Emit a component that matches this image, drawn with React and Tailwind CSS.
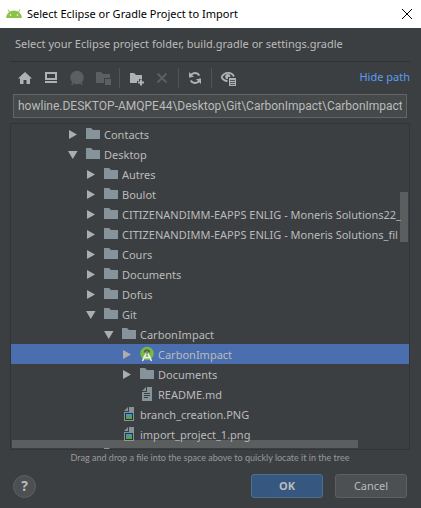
import React from "react";

const ROWS = [
  { level: 0, arrow: "closed", icon: "folder", name: "Contacts" },
  { level: 0, arrow: "open", icon: "folder", name: "Desktop" },
  { level: 1, arrow: "closed", icon: "folder", name: "Autres" },
  { level: 1, arrow: "closed", icon: "folder", name: "Boulot" },
  { level: 1, arrow: "closed", icon: "folder", name: "CITIZENANDIMM-EAPPS ENLIG - Moneris Solutions22_" },
  { level: 1, arrow: "closed", icon: "folder", name: "CITIZENANDIMM-EAPPS ENLIG - Moneris Solutions_fil" },
  { level: 1, arrow: "closed", icon: "folder", name: "Cours" },
  { level: 1, arrow: "closed", icon: "folder", name: "Documents" },
  { level: 1, arrow: "closed", icon: "folder", name: "Dofus" },
  { level: 1, arrow: "open", icon: "folder", name: "Git" },
  { level: 2, arrow: "open", icon: "folder", name: "CarbonImpact" },
  { level: 3, arrow: "closed", icon: "studio", name: "CarbonImpact", selected: true },
  { level: 3, arrow: "closed", icon: "folder", name: "Documents" },
  { level: 3, icon: "text", name: "README.md" },
  { level: 2, icon: "image", name: "branch_creation.PNG" },
  { level: 2, icon: "image", name: "import_project_1.png" },
  { level: 1, icon: "folder", name: "" },
];

const INDENT = ["pl-[54px]", "pl-[72px]", "pl-[90px]", "pl-[108px]"];

function Svg({ children, className = "" }) {
  return (
    <svg width="16" height="16" viewBox="0 0 16 16" aria-hidden="true" className={"shrink-0 " + className}>
      {children}
    </svg>
  );
}

function Arrow({ state }) {
  return (
    <Svg>
      {state === "closed" && <path d="M4 4v9l8-4.500z" fill="#adadad" />}
      {state === "open" && <path d="M3 5h9.500l-4.750 8z" fill="#adadad" />}
    </Svg>
  );
}

function FileIcon({ kind }) {
  if (kind === "folder") {
    return (
      <Svg>
        <path d="M1 2h5l2 2h7v9H1z" fill="#87939a" />
      </Svg>
    );
  }
  if (kind === "studio") {
    return (
      <Svg>
        <circle cx="8" cy="7.500" r="6.800" fill="#78b944" />
        <path d="M4.800 6.500a3.200 3.200 0 0 1 6.400 0z" fill="#4d6b3c" />
        <path d="M7.300 7L3.500 15M8.700 7l3.800 8M4.500 10.500c2.200 1.600 4.800 1.600 7 0" stroke="#f0f0f0" strokeWidth="1.600" fill="none" />
        <circle cx="8" cy="6.500" r="1.600" fill="#8a8f94" />
      </Svg>
    );
  }
  return (
    <Svg>
      <path d="M8 1h5v14H3V6h5z" fill="#87939a" />
      <path d="M7 1v4H3z" fill="#87939a" />
      {kind === "text" ? (
        <path d="M5 7.500h6M5 9.500h6M5 11.500h4" stroke="#3c3f41" />
      ) : (
        <>
          <path d="M4 7h8v7H4z" fill="#2b3436" />
          <path d="M5 8h6v3H5z" fill="#3d9ac4" />
          <path d="M5 11l2-1 2 1 2-1v3H5z" fill="#5f9e3f" />
        </>
      )}
    </Svg>
  );
}

function Tool({ label, disabled, children }) {
  return (
    <button type="button" aria-label={label} disabled={disabled} className="size-4">
      <Svg>{children}</Svg>
    </button>
  );
}

function Separator() {
  return <span className="mx-2 h-5 w-px bg-[#515355]" />;
}

function Toolbar() {
  return (
    <div className="flex h-[31px] items-center pl-[7px]">
      <div className="flex gap-[10px]">
        <Tool label="Home">
          <path d="M8 2l7 6.500h-2V14H9.500v-4h-3v4H3V8.500H1z" fill="#afb1b3" />
        </Tool>
        <Tool label="Desktop">
          <path d="M3 3h10v6H3z" fill="none" stroke="#afb1b3" strokeWidth="2" />
          <path d="M2 11h12v2H2z" fill="#afb1b3" />
        </Tool>
        <Tool label="Project directory" disabled>
          <circle cx="8" cy="7.500" r="6.800" fill="#5c5e60" />
          <path d="M4.500 11l-1.500 4M11.500 11l1.500 4" stroke="#5c5e60" strokeWidth="1.500" />
        </Tool>
        <Tool label="Module directory" disabled>
          <path d="M1 2h5l2 2h7v4H9v5H1z" fill="#5c5e60" />
          <path d="M10 9h6v6h-6z" fill="#5c5e60" />
        </Tool>
      </div>
      <Separator />
      <div className="flex gap-[10px]">
        <Tool label="New folder">
          <path d="M2 3h4l2 2h6v4h-3v2H9v2H2z" fill="#afb1b3" />
          <path d="M13 9.500v6M10 12.500h6" stroke="#afb1b3" strokeWidth="2" />
        </Tool>
        <Tool label="Delete" disabled>
          <path d="M3.500 3.500l9 9M12.500 3.500l-9 9" stroke="#5c5e60" strokeWidth="2" />
        </Tool>
      </div>
      <Separator />
      <Tool label="Refresh">
        <path d="M3 7.500A5 5 0 0 1 12.300 5.500M13 8.500A5 5 0 0 1 3.700 10.500" fill="none" stroke="#afb1b3" strokeWidth="2" />
        <path d="M2 2v5h5zM14 14V9H9z" fill="#afb1b3" />
      </Tool>
      <Separator />
      <Tool label="Show hidden files">
        <path d="M1.500 7C4.500 1.500 11.500 1.500 14 6.500M1.500 7C3 10 5 11 7.500 11" fill="none" stroke="#afb1b3" strokeWidth="1.800" />
        <circle cx="7.800" cy="6.500" r="2.600" fill="#afb1b3" />
        <path d="M8 7h8v9H8z" fill="#3c3f41" />
        <path d="M9 8h7v8H9z" fill="#afb1b3" />
        <path d="M10 10.500h5M10 12.500h5M10 14.500h5" stroke="#3c3f41" strokeWidth="0.800" />
      </Tool>
      <a href="#path" className="ml-auto text-[#589df6]">
        Hide path
      </a>
    </div>
  );
}

function Tree() {
  return (
    <div className="relative h-[327px] grow overflow-hidden border border-[#323435]">
      <ul>
        {ROWS.map((row, i) => (
          <li
            key={i}
            className={"flex h-5 items-center whitespace-nowrap " + INDENT[row.level] + (row.selected ? " bg-[#4b6eaf]" : "")}
          >
            <Arrow state={row.arrow} />
            <span className="ml-1 flex items-center gap-[3px]">
              <FileIcon kind={row.icon} />
              <span className="pt-[2px]">{row.name}</span>
            </span>
          </li>
        ))}
      </ul>
      <span className="absolute top-[68px] right-[1px] h-[50px] w-2 bg-[#a6a6a6]/30" />
      <span className="absolute bottom-[1px] left-[1px] h-2 w-[87%] bg-[#a6a6a6]/30" />
    </div>
  );
}

export default function App() {
  return (
    <div className="flex min-h-screen flex-col bg-[#3c3f41] font-['Noto_Sans','Open_Sans',sans-serif] text-[11px] text-[#bbbbbb]">
      <header className="flex h-7 items-center bg-white pr-2 pl-[6px] text-black">
        <svg width="16" height="16" viewBox="0 0 16 16" aria-hidden="true">
          <path d="M0 12a8 7.500 0 0 1 16 0z" fill="#8bc34a" />
          <path d="M3.500 6L2 3.500M12.500 6L14 3.500" stroke="#8bc34a" />
          <circle cx="4.500" cy="9" r="0.800" fill="#fff" />
          <circle cx="11.500" cy="9" r="0.800" fill="#fff" />
        </svg>
        <h1 className="ml-[5px]">Select Eclipse or Gradle Project to Import</h1>
        <button type="button" aria-label="Close" className="ml-auto">
          <svg width="12" height="12" viewBox="0 0 12 12" className="block">
            <path d="M1 1l10 10M11 1L1 11" stroke="#000" />
          </svg>
        </button>
      </header>
      <main className="flex grow flex-col pr-[11px] pl-[10px]">
        <p className="flex h-[34px] items-center border-b border-[#2f3132] pl-[5px]">
          Select your Eclipse project folder, build.gradle or settings.gradle
        </p>
        <Toolbar />
        <div className="mb-[5px] px-[3px] pt-[1px]">
          <input
            aria-label="Path"
            type="text"
            defaultValue={"howline.DESKTOP-AMQPE44\\Desktop\\Git\\CarbonImpact\\CarbonImpact"}
            className="block h-6 w-full border border-[#646464] bg-[#45494a] px-1 font-['Roboto',sans-serif] text-[12px] text-[#bbbbbb] outline-none"
          />
        </div>
        <Tree />
        <p className="flex h-[15px] items-center justify-center font-['Lato',sans-serif] text-[9px] text-[#999999]">
          Drag and drop a file into the space above to quickly locate it in the tree
        </p>
        <footer className="flex items-center gap-3 px-[3px] pt-[9px] pb-[10px]">
          <button
            type="button"
            aria-label="Help"
            className="mr-auto size-[23px] rounded-full border border-[#5e6060] bg-[#4c5052] text-[14px] leading-none font-bold"
          >
            ?
          </button>
          <button type="button" className="h-6 w-[72px] rounded-[3px] border border-[#4c708c] bg-[#365880] font-bold">
            OK
          </button>
          <button type="button" className="h-6 w-[72px] rounded-[3px] border border-[#5e6060] bg-[#4c5052]">
            Cancel
          </button>
        </footer>
      </main>
    </div>
  );
}
